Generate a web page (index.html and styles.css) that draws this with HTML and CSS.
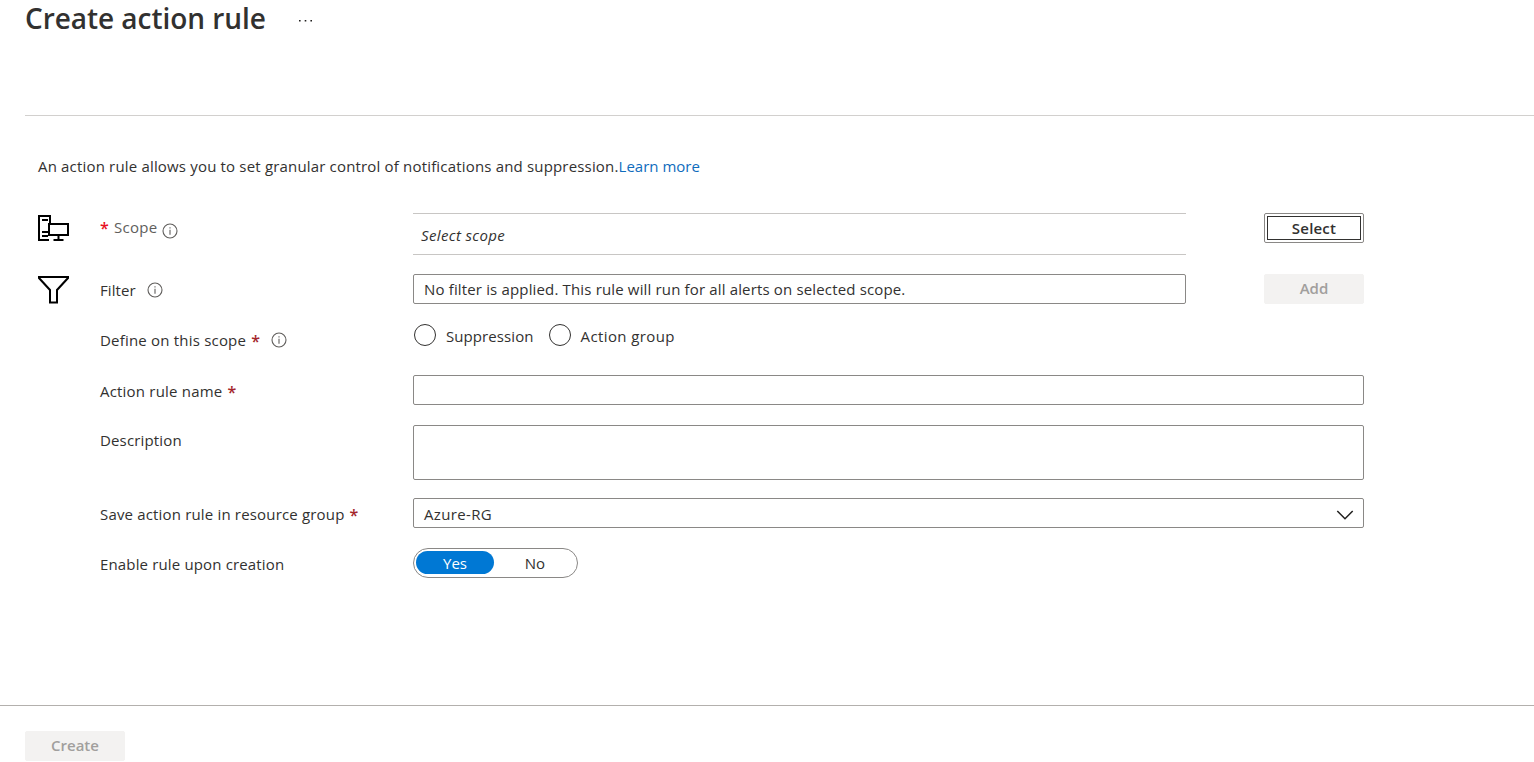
FILE: index.html
```html
<!DOCTYPE html>
<html lang="en">
<head>
<meta charset="utf-8">
<title>Create action rule</title>
<link rel="stylesheet" href="styles.css">
</head>
<body>
<div class="page">
  <header class="header">
    <h1 class="title">Create action rule</h1>
    <svg class="more" width="14" height="2" viewBox="0 0 14 2"><path d="M0 0h1.600v1.600H0zM5.700 0h1.600v1.600H5.700zM11.400 0h1.600v1.600H11.400z"/></svg>
  </header>
  <main class="content">
    <p class="intro"><span class="intro-text">An action rule allows you to set granular control of notifications and suppression.</span><a class="link">Learn more</a></p>
    <div class="form">
      <svg class="icon icon-scope" width="32" height="27" viewBox="0 0 32 27"><path d="M11 25H1V1h11v7M4 5h6M4 17h6M4 21h6M11 9h19v11H11zM20.500 20v5M15.500 25h10"/></svg>
      <div class="label label-scope"><span class="star star-bright">*</span><span class="t-scope">Scope</span><svg class="info info-low" viewBox="0 0 16 16"><circle cx="8" cy="8" r="7"/><path d="M8 6.800v5M8 4.200v1.200"/></svg></div>
      <div class="scope-box"><span class="t-select-scope">Select scope</span></div>
      <button class="button button-focus"><span class="t-select">Select</span></button>

      <svg class="icon icon-filter" width="33" height="29" viewBox="0 0 33 29"><path d="M2 2h29v1L20 15v12.500h-7V15L2 3z"/></svg>
      <div class="label"><span class="t-filter">Filter</span><svg class="info" viewBox="0 0 16 16"><circle cx="8" cy="8" r="7"/><path d="M8 6.800v5M8 4.200v1.200"/></svg></div>
      <div class="field"><span class="t-nofilter">No filter is applied. This rule will run for all alerts on selected scope.</span></div>
      <button class="button button-disabled"><span class="t-add">Add</span></button>

      <div class="label label-define"><span class="t-define">Define on this scope</span><span class="star">*</span><svg class="info" viewBox="0 0 16 16"><circle cx="8" cy="8" r="7"/><path d="M8 6.800v5M8 4.200v1.200"/></svg></div>
      <div class="radios">
        <label class="radio"><span class="dot"></span><span class="t-suppression">Suppression</span></label>
        <label class="radio"><span class="dot"></span><span class="t-group">Action group</span></label>
      </div>

      <div class="label"><span class="t-name">Action rule name</span><span class="star">*</span></div>
      <div class="field wide"></div>

      <div class="label label-description"><span class="t-description">Description</span></div>
      <div class="field wide area"></div>

      <div class="label"><span class="t-save">Save action rule in resource group</span><span class="star">*</span></div>
      <div class="field wide select"><span class="t-azure">Azure-RG</span><svg width="18" height="10" viewBox="0 0 18 10"><path d="M1.300 1L9 8.700 16.700 1"/></svg></div>

      <div class="label"><span class="t-enable">Enable rule upon creation</span></div>
      <div class="toggle"><span class="option option-on"><span class="t-yes">Yes</span></span><span class="option"><span class="t-no">No</span></span></div>
    </div>
  </main>
  <footer class="footer"><button class="button button-disabled"><span class="t-create">Create</span></button></footer>
</div>
</body>
</html>
```
FILE: styles.css
```css
* { box-sizing: border-box; }
body { margin: 0; background: #fff; color: #323130; font: 15px/30px "Open Sans", "Noto Sans", sans-serif; }
.page { display: flex; flex-direction: column; height: 762px; overflow: hidden; }
.header { display: flex; gap: 33px; height: 116px; margin-left: 25px; border-bottom: 1px solid #d2d0ce; }
.title { margin: 0; font-size: 28px; font-weight: 600; line-height: 36px; letter-spacing: -0.05px; white-space: nowrap; }
.more { margin-top: 20px; fill: #201f1e; }
.content { flex: 1; padding: 35px 0 0 38px; }
.intro { margin: 0 0 32px; white-space: nowrap; }
.intro-text { letter-spacing: 0.175px; }
.link { color: #0f6cbd; }
.form { display: grid; grid-template-columns: 62px 313px 773px 78px 100px; grid-template-rows: 61px 50px 51px 50px 73px 50px 30px; }
.form span { white-space: nowrap; }
.t-nofilter { letter-spacing: 0.155px; }
.t-define, .t-name { letter-spacing: 0.2px; }
.t-save { letter-spacing: 0.17px; }
.t-description, .t-enable { letter-spacing: 0.15px; }
.t-filter, .t-suppression { letter-spacing: 0.08px; }
.t-select-scope, .t-azure { letter-spacing: 0.36px; }
.t-group { letter-spacing: 0.4px; }
.t-scope { letter-spacing: 0.3px; }
.icon { grid-column: 1; fill: none; stroke: #000; stroke-width: 2; }
.icon-scope { margin-top: 2px; }
.icon-filter { margin: 1px 0 0 -1px; }
.label { grid-column: 2; display: flex; align-items: center; height: 30px; margin-top: 1px; }
.label-scope { margin-top: -1px; color: #605e5c; }
.label-define { margin-top: 1px; }
.label-description { margin-top: 0; }
.star { width: 9px; margin: 1px 0 0 5px; color: #a4262c; font-size: 16px; font-weight: 600; }
.star-bright { margin: 1px 5px 0 0; color: #e81123; }
.info { width: 16px; height: 16px; margin-left: 11px; fill: none; stroke: #605e5c; stroke-width: 1.1; }
.info-low { margin: 7px 0 0 4px; }
.scope-box { grid-column: 3; height: 42px; padding: 6px 8px; border: solid #c8c6c4; border-width: 1px 0; font-style: italic; }
.button { grid-column: 5; width: 100px; height: 30px; padding: 0 0 1px; border: 1px solid #8a8886; border-radius: 2px; background: #fff; color: #323130; font: 600 15px/27px "Open Sans", "Noto Sans", sans-serif; }
.button-focus { padding: 0; line-height: 28px; outline: 1px solid #323130; outline-offset: -4px; }
.t-select { letter-spacing: 0.2px; }
.button-disabled { padding-bottom: 2px; border-color: #f3f2f1; background: #f3f2f1; color: #a19f9d; }
.field { grid-column: 3; display: flex; height: 30px; padding: 0 10px; border: 1px solid #8a8886; border-radius: 2px; line-height: 29px; }
.wide { grid-column: 3 / 6; }
.area { height: 55px; }
.select { align-items: center; justify-content: space-between; padding-right: 9px; line-height: 30px; }
.select .t-azure { margin-top: 2px; }
.select svg { margin-top: 3px; fill: none; stroke: #201f1e; stroke-width: 1.5; }
.radios { grid-column: 3; display: flex; height: 24px; gap: 15px; padding-left: 1px; }
.radio { display: flex; align-items: center; gap: 10px; }
.dot { width: 22px; height: 22px; margin-top: -2px; border: 1px solid #323130; border-radius: 50%; }
.toggle { grid-column: 3; display: flex; width: 165px; height: 30px; padding: 2px; border: 1px solid #8a8886; border-radius: 15px; }
.option { flex: none; width: 78px; height: 23px; border-radius: 12px; line-height: 24px; text-align: center; }
.option + .option { width: 82px; }
.option-on { background: #0078d4; color: #fff; }
.footer { display: flex; align-items: flex-start; height: 57px; padding: 25px 25px 0; border-top: 1px solid #b3b0ad; }
```
